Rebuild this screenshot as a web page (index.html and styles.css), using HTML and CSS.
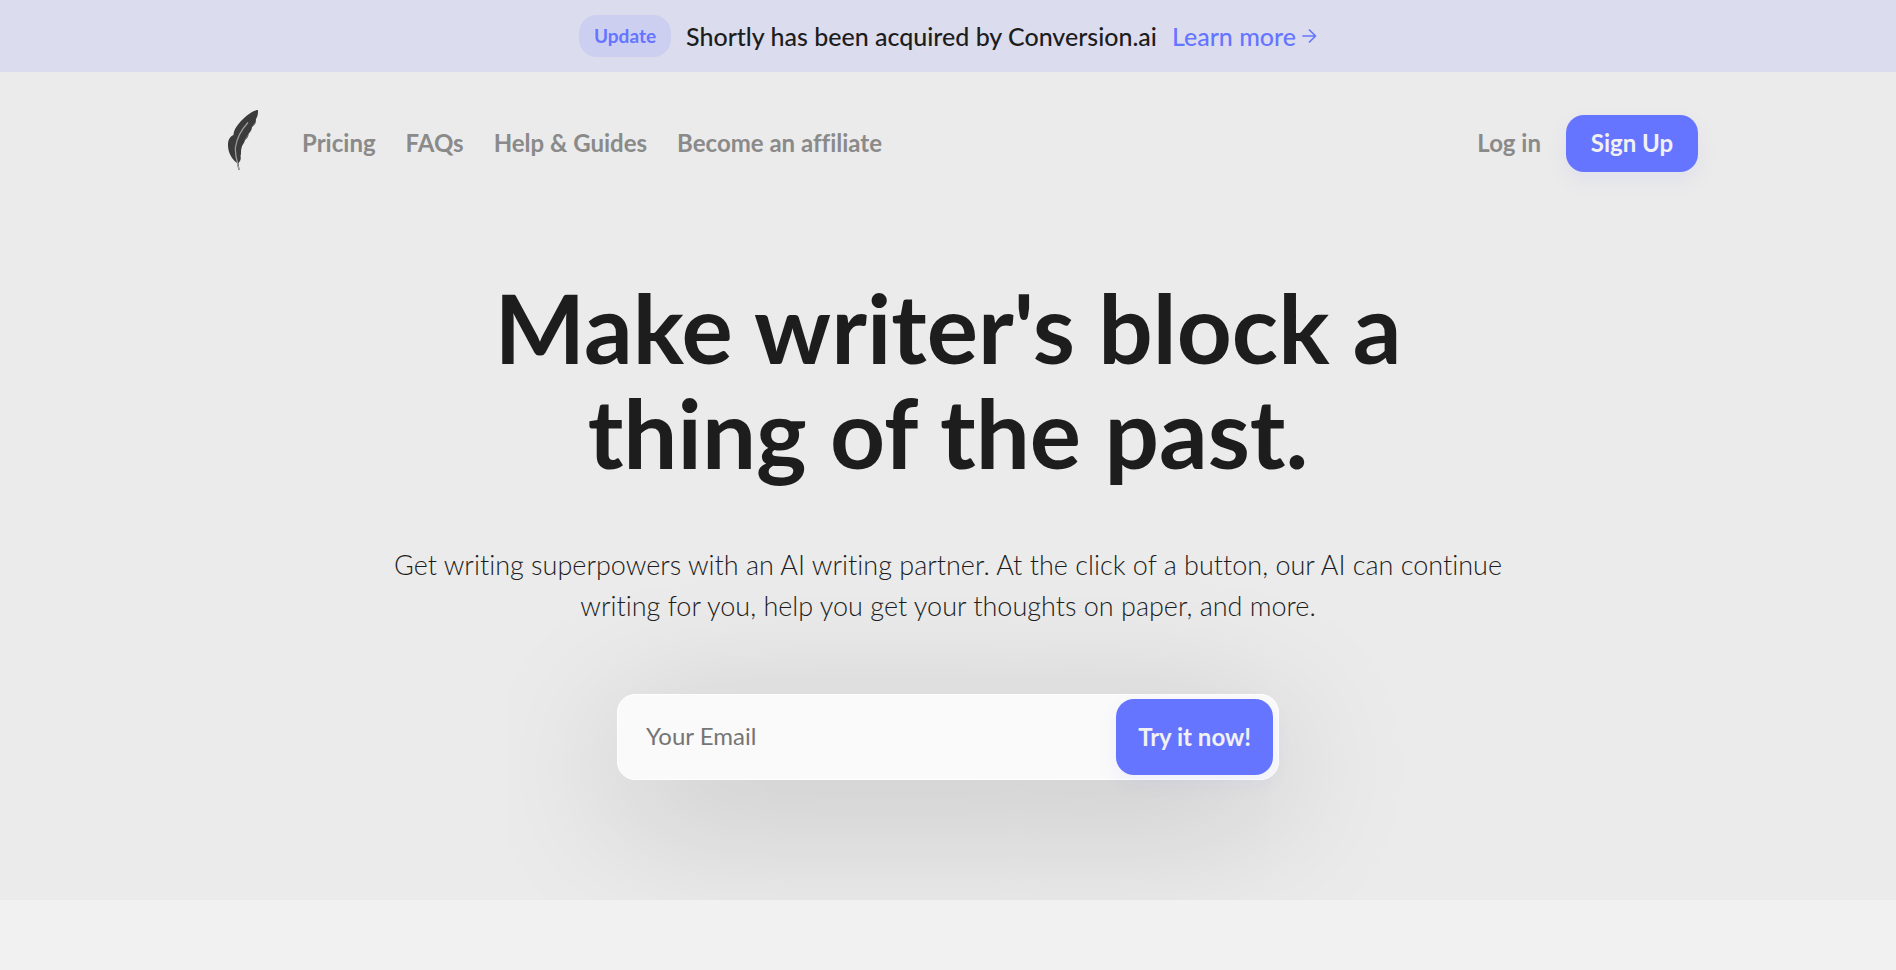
FILE: index.html
```html
<!doctype html>
<html lang="en">
<head>
<meta charset="UTF-8">
<meta name="viewport" content="width=device-width, initial-scale=1">
<title>Shortly</title>
<link rel="stylesheet" href="styles.css">
</head>
<body>
	<div class="banner">
		<span class="badge">Update</span>
		<span>Shortly has been acquired by Conversion.ai</span>
		<a class="learn" href="#">Learn more
			<svg width="15" height="16" viewBox="0 0 15 16" fill="none" stroke="currentColor" stroke-width="1.7" stroke-linecap="round" stroke-linejoin="round" aria-hidden="true"><path d="M1 8h12.500M7.500 2l6 6-6 6"/></svg>
		</a>
	</div>
	<div class="hero">
		<header class="header">
			<a class="logo" href="#" aria-label="Shortly">
				<svg width="30" height="60" viewBox="0 0 30 60" aria-hidden="true">
					<path fill="#3b3b3b" d="M29 0C22 2 14 9 9 16C6 20 5.500 23 5.500 25C1 27 0 31 0 35C0 43 4 49 9 53L10.500 60H11.500L10.500 53C13 51 13 48 12.500 46C13.500 43 12.500 41 13.500 38C14.500 34 16.500 33 17 30C19 28 20.500 27 20.500 24C23 21 24 19 24 17C27 15 28 12 28 9C30 6 30 3 30 0Z"/>
					<path fill="none" stroke="#9a9a9a" stroke-width="1.300" d="M20 12.500C14 19 9 28 7.500 37C7 43 8 48 9.500 53L11 60"/>
					<path fill="none" stroke="#777" stroke-width="1" d="M28 12L24 17M20 25L17 30"/>
				</svg>
			</a>
			<nav class="nav">
				<a href="#">Pricing</a>
				<a href="#">FAQs</a>
				<a href="#">Help &amp; Guides</a>
				<a href="#">Become an affiliate</a>
			</nav>
			<a class="login" href="#">Log in</a>
			<button class="btn" type="button">Sign Up</button>
		</header>
		<main class="intro">
			<h1>Make writer's block a<br>thing of the past.</h1>
			<p>Get writing superpowers with an AI writing partner. At the click of a button, our AI can continue<br>writing for you, help you get your thoughts on paper, and more.</p>
			<form class="signup">
				<input type="email" placeholder="Your Email" aria-label="Your Email">
				<button class="btn" type="submit">Try it now!</button>
			</form>
		</main>
	</div>
</body>
</html>
```
FILE: styles.css
```css
*{margin:0;padding:0;box-sizing:border-box;}
body{background:#f1f1f1;color:#1d1d1d;font-family:Lato,"Open Sans",sans-serif;font-size:24px;font-variant-ligatures:none;}
a{color:inherit;text-decoration:none;}
svg{display:block;}

/* announcement */
.banner{display:flex;justify-content:center;align-items:center;gap:15px;min-height:72px;padding:15px;background:#dbdcee;font-size:25px;font-weight:500;line-height:30px;}
.badge{padding:6px 15px;border-radius:18px;background:#cdcff1;color:#6675ff;font-size:19px;font-weight:700;}
.learn{display:flex;align-items:center;gap:6px;color:#6675ff;}

.hero{padding:38px 24px 120px;background:#ebebeb;overflow:hidden;}

/* header */
.header{display:flex;align-items:center;max-width:1500px;margin:0 auto;padding-left:30px;font-weight:700;line-height:30px;}
.logo{padding-bottom:6px;}
.nav{display:flex;gap:30px;margin-left:44px;color:#8a8a8a;}
.login{margin-left:auto;margin-right:25px;color:#8a8a8a;}
.btn{min-width:132px;padding:13px 22px 14px;border:0;border-radius:18px;background:#6675ff;color:#f1f1f1;font:inherit;font-weight:700;line-height:30px;box-shadow:0 8px 20px rgba(102,117,255,.08);cursor:pointer;}

/* intro */
.intro{padding-top:98px;text-align:center;}
.intro h1{font-size:96px;font-weight:700;line-height:105px;}
.intro p{margin-top:60px;font-size:27px;font-weight:300;line-height:41px;}
.signup{display:flex;align-items:stretch;width:100%;max-width:662px;height:86px;margin:68px auto 0;padding:4px 5px 4px 0;border:1px solid #fff;border-radius:18px;background:#fafafa;box-shadow:0 30px 150px rgba(0,0,0,.2);}
.signup input{flex:1;min-width:0;padding:0 28px 4px;border:0;border-radius:18px;background:none;color:inherit;font:inherit;outline:0;}
.signup input::placeholder{color:#757575;}
```
